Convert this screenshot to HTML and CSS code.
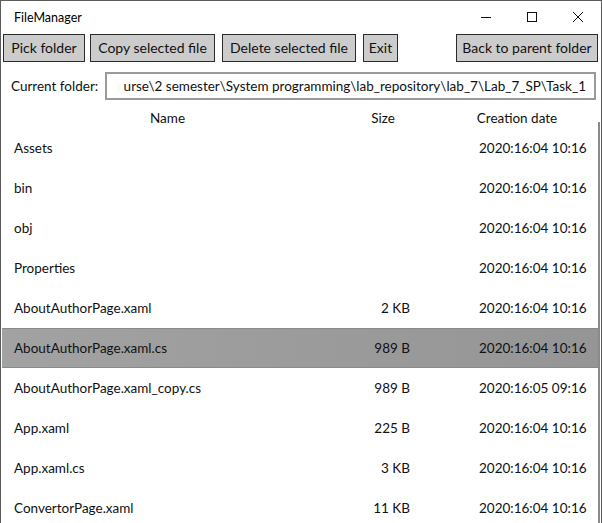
FILE: index.html
```html
<!DOCTYPE html>
<html>
<head>
<meta charset="utf-8">
<link rel="stylesheet" href="styles.css">
</head>
<body>
<div class="window">
  <div class="titlebar">
    <span class="title">FileManager</span>
    <div class="controls">
      <span class="ctl"><svg width="10" height="10" viewBox="0 0 10 10"><line x1="0" y1="5.5" x2="10" y2="5.5" stroke="#111" stroke-width="1"/></svg></span>
      <span class="ctl"><svg width="10" height="10" viewBox="0 0 10 10"><rect x="0.5" y="0.5" width="9" height="9" fill="none" stroke="#111" stroke-width="1"/></svg></span>
      <span class="ctl"><svg width="10" height="10" viewBox="0 0 10 10"><path d="M0 0L10 10M10 0L0 10" stroke="#111" stroke-width="1"/></svg></span>
    </div>
  </div>
  <div class="toolbar">
    <button class="btn b-pick">Pick folder</button>
    <button class="btn b-copy">Copy selected file</button>
    <button class="btn b-del">Delete selected file</button>
    <button class="btn b-exit">Exit</button>
    <button class="btn b-back">Back to parent folder</button>
  </div>
  <div class="pathrow">
    <span class="label">Current folder:</span>
    <div class="pathbox"><span class="pathtext">urse\2 semester\System programming\lab_repository\lab_7\Lab_7_SP\Task_1</span></div>
  </div>
  <div class="header">
    <span class="h-name">Name</span>
    <span class="h-size">Size</span>
    <span class="h-date">Creation date</span>
  </div>
  <div class="list">
    <div class="row"><span class="name">Assets</span><span class="size"></span><span class="date">2020:16:04 10:16</span></div>
    <div class="row"><span class="name">bin</span><span class="size"></span><span class="date">2020:16:04 10:16</span></div>
    <div class="row"><span class="name">obj</span><span class="size"></span><span class="date">2020:16:04 10:16</span></div>
    <div class="row"><span class="name">Properties</span><span class="size"></span><span class="date">2020:16:04 10:16</span></div>
    <div class="row"><span class="name">AboutAuthorPage.xaml</span><span class="size">2 KB</span><span class="date">2020:16:04 10:16</span></div>
    <div class="row selected"><span class="name">AboutAuthorPage.xaml.cs</span><span class="size">989 B</span><span class="date">2020:16:04 10:16</span></div>
    <div class="row"><span class="name">AboutAuthorPage.xaml_copy.cs</span><span class="size">989 B</span><span class="date">2020:16:05 09:16</span></div>
    <div class="row"><span class="name">App.xaml</span><span class="size">225 B</span><span class="date">2020:16:04 10:16</span></div>
    <div class="row"><span class="name">App.xaml.cs</span><span class="size">3 KB</span><span class="date">2020:16:04 10:16</span></div>
    <div class="row"><span class="name">ConvertorPage.xaml</span><span class="size">11 KB</span><span class="date">2020:16:04 10:16</span></div>
    <div class="scrollbar"></div>
  </div>
</div>
</body>
</html>
```
FILE: styles.css
```css
* { box-sizing: border-box; }
html, body { margin: 0; padding: 0; background: #fff; }
body {
  width: 602px; height: 523px; overflow: hidden;
  font-family: Lato, "Noto Sans", sans-serif;
  color: #1a1a1a;
}
.window {
  width: 602px; height: 530px;
  border: 1px solid #5a5a5a;
  border-bottom: none;
  background: #fff;
}
.titlebar {
  height: 31px;
  display: flex; align-items: center; justify-content: space-between;
}
.title { font-size: 12.5px; padding-left: 13px; padding-top: 1px; color: #000; }
.controls { display: flex; height: 31px; }
.ctl { width: 46px; display: flex; align-items: center; justify-content: center; }
.toolbar {
  display: flex; height: 30px; padding: 2px 3px 0 2px;
}
.btn {
  height: 28px; margin: 0;
  background: #cccccc; border: 1px solid #2b2b2b;
  font-family: inherit; font-size: 14px; color: #111;
  padding: 0 0 1px; border-radius: 0; white-space: nowrap;
}
.b-pick { width: 82px; }
.b-copy { width: 125px; margin-left: 5px; }
.b-del { width: 134px; margin-left: 7px; }
.b-exit { width: 35px; margin-left: 7px; }
.b-back { width: 142px; margin-left: auto; }
.pathrow {
  display: flex; align-items: center; height: 39px; padding: 8px 5px 0 10px;
}
.label { font-size: 13.5px; width: 94px; color: #111; }
.pathbox {
  flex: 1; height: 28px; border: 2px solid #9a9a9a;
  overflow: hidden; display: flex; align-items: center; justify-content: flex-end;
  padding-right: 8px; white-space: nowrap;
}
.pathtext { font-size: 13.5px; color: #111; }
.header {
  display: grid; grid-template-columns: 333px 98px 170px;
  height: 27px; align-items: center; padding-top: 6px;
  font-size: 13.5px; color: #111;
}
.header span { text-align: center; }
.list { position: relative; }
.row {
  display: grid; grid-template-columns: 346px 50px 1fr;
  height: 40px; align-items: center;
  margin: 0 3px 0 1px; padding-left: 12px;
  font-size: 13.5px; color: #111;
}
.size { text-align: right; }
.date { padding-left: 69px; white-space: nowrap; }
.row.selected {
  background: linear-gradient(90deg, #a2a2a2, #959595);
  border-top: 1px solid #8a8a8a; border-bottom: 1px solid #8a8a8a;
}
.scrollbar {
  position: absolute; right: 1px; top: -6px; width: 2px; height: 420px;
  background: #8a8a8a;
}
```
